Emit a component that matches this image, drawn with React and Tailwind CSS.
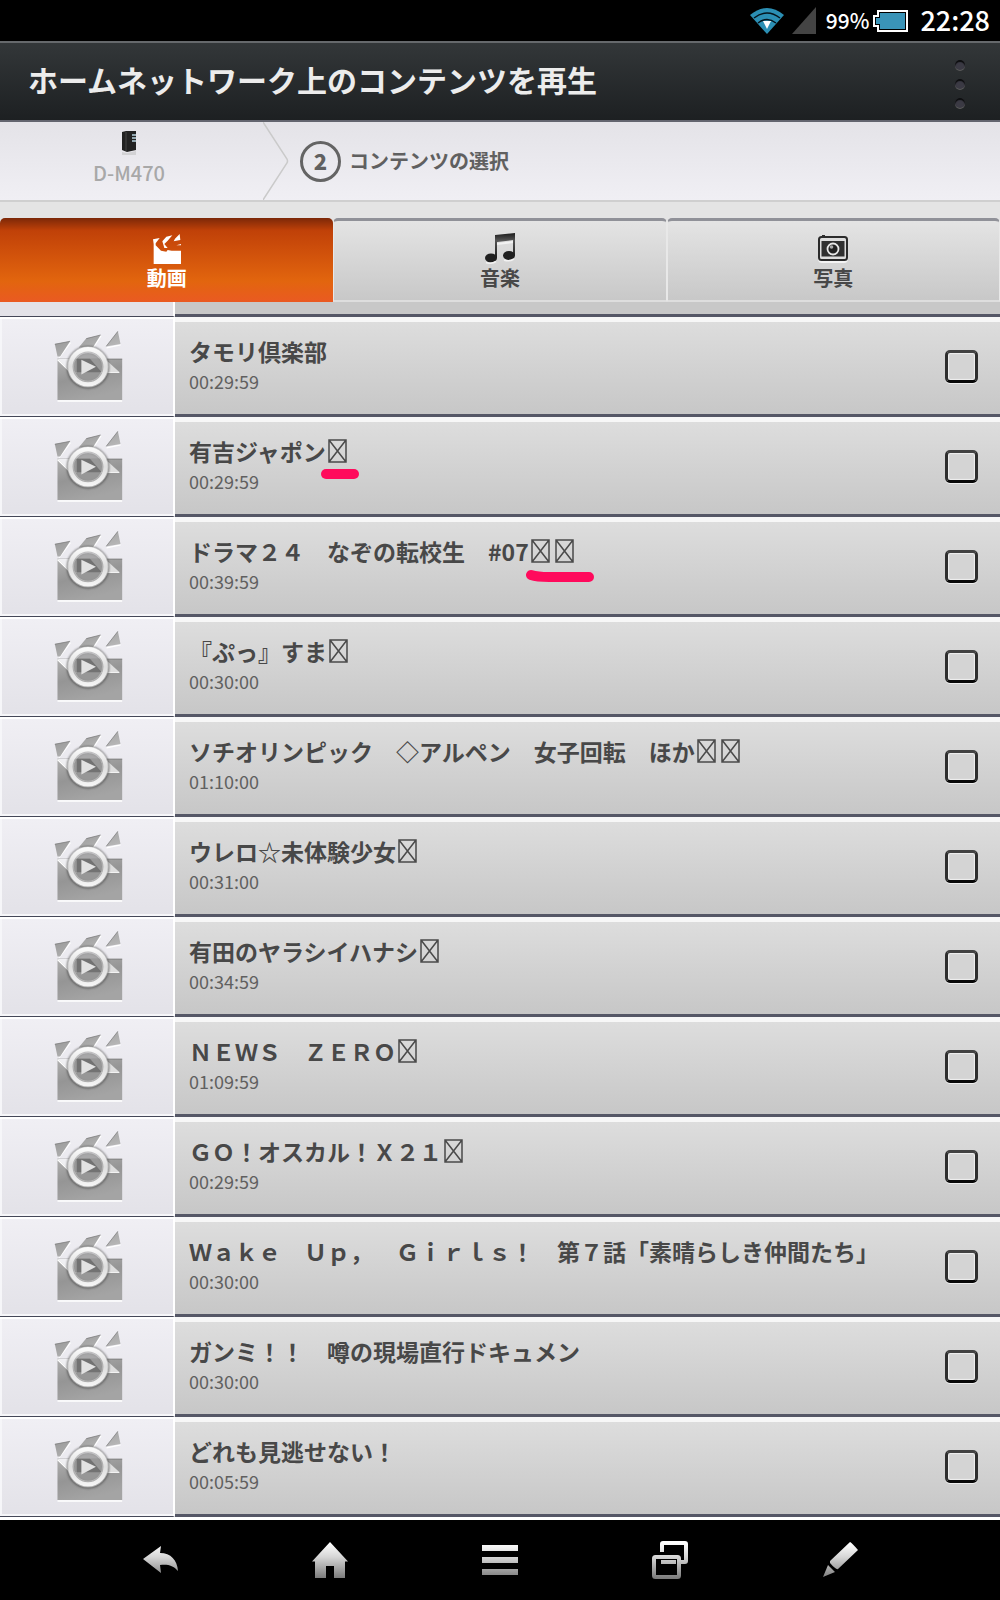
import React from "react";

const rows = [
  { title: "タモリ倶楽部", time: "00:29:59" },
  { title: "有吉ジャポン", time: "00:29:59", missing: 1, mark: "short" },
  { title: "ドラマ２４　なぞの転校生　#07", time: "00:39:59", missing: 2, mark: "long" },
  { title: "『ぷっ』すま", time: "00:30:00", missing: 1 },
  { title: "ソチオリンピック　◇アルペン　女子回転　ほか", time: "01:10:00", missing: 2 },
  { title: "ウレロ☆未体験少女", time: "00:31:00", missing: 1 },
  { title: "有田のヤラシイハナシ", time: "00:34:59", missing: 1 },
  { title: "ＮＥＷＳ　ＺＥＲＯ", time: "01:09:59", missing: 1 },
  { title: "ＧＯ！オスカル！Ｘ２１", time: "00:29:59", missing: 1 },
  { title: "Ｗａｋｅ　Ｕｐ，　Ｇｉｒｌｓ！　第７話「素晴らしき仲間たち」", time: "00:30:00" },
  { title: "ガンミ！！　噂の現場直行ドキュメン", time: "00:30:00" },
  { title: "どれも見逃せない！", time: "00:05:59" },
];

function Gradients() {
  return (
    <svg width="0" height="0" className="absolute" aria-hidden="true">
      <defs>
        <linearGradient id="nav" x1="0" y1="3" x2="0" y2="38" gradientUnits="userSpaceOnUse">
          <stop offset="0" stopColor="#ffffff" />
          <stop offset="0.4" stopColor="#d6d6d6" />
          <stop offset="1" stopColor="#7c7c7c" />
        </linearGradient>
        <linearGradient id="body" x1="0" y1="0" x2="0.4" y2="1">
          <stop offset="0" stopColor="#b0b0b0" />
          <stop offset="0.5" stopColor="#959595" />
          <stop offset="1" stopColor="#a4a4a4" />
        </linearGradient>
        <linearGradient id="slat" x1="0" y1="0" x2="1" y2="1">
          <stop offset="0" stopColor="#909090" />
          <stop offset="1" stopColor="#c4c4c4" />
        </linearGradient>
        <linearGradient id="ring" x1="0" y1="0" x2="0" y2="1">
          <stop offset="0" stopColor="#fafafa" />
          <stop offset="0.5" stopColor="#dedede" />
          <stop offset="1" stopColor="#f4f4f4" />
        </linearGradient>
        <linearGradient id="note" x1="0" y1="0" x2="0" y2="1">
          <stop offset="0" stopColor="#1c1c1c" />
          <stop offset="0.3" stopColor="#555555" />
          <stop offset="1" stopColor="#1c1c1c" />
        </linearGradient>
        <filter id="glow" x="-30%" y="-30%" width="160%" height="160%">
          <feGaussianBlur stdDeviation="4" />
        </filter>
      </defs>
    </svg>
  );
}

function Thumb() {
  return (
    <svg width="70" height="73" viewBox="40 60 210 220" aria-hidden="true">
      <path d="M50 274h195M55 143l34-45M119 118h36l26-40M198 114l42-9" stroke="#fff" strokeWidth="4" fill="none" />
      <path d="M50 147h195v124H50z" fill="url(#body)" />
      <path d="M50 148h195" stroke="#777" strokeWidth="2" />
      <path d="M42 102L88 94 58 140 50 140zM114 113L137 85 180 75 155 115zM196 110L232 64 240 102z" fill="url(#slat)" />
      <path d="M42 103L88 94M137 86L180 75M197 109L232 64" stroke="#777" strokeWidth="2" />
      <path d="M50 147L92 188V147z" fill="#efeff2" />
      <path d="M50 149L92 190" stroke="#fff" strokeWidth="4" />
      <path d="M152 147H196L236 188H190z" fill="#a0a0a0" />
      <path d="M198 152L238 188H196z" fill="#dedede" />
      <path d="M104 188h132" stroke="#f5f5f5" strokeWidth="3" />
      <circle cx="142" cy="172" r="53" fill="none" stroke="#3a3a3a" strokeWidth="22" opacity="0.65" filter="url(#glow)" />
      <circle cx="142" cy="172" r="42" fill="#979797" opacity="0.8" />
      <path d="M108 147h40l36 41h-76z" fill="#727272" />
      <circle cx="142" cy="171" r="52" fill="none" stroke="#ffffff" strokeWidth="20" opacity="0.45" />
      <circle cx="142" cy="171" r="53" fill="none" stroke="url(#ring)" strokeWidth="13" />
      <path d="M122 150L166 171 122 194z" fill="#e2e2e2" />
    </svg>
  );
}

function MissingGlyph() {
  return (
    <svg width="24" height="26" viewBox="0 0 24 26" fill="none" stroke="#4a4a4a" role="img" aria-label="外字">
      <path d="M3 2h17v22h-17zM3 2l17 22M20 2L3 24" strokeWidth="1.500" />
    </svg>
  );
}

function Mark({ kind }) {
  return kind === "short" ? (
    <svg className="absolute -left-1.5 top-[30px]" width="40" height="12" viewBox="0 0 40 12" aria-hidden="true">
      <path d="M6 6h28" stroke="#ff0a5c" strokeWidth="10" strokeLinecap="round" />
    </svg>
  ) : (
    <svg className="absolute -left-1 top-[30px]" width="70" height="16" viewBox="0 0 70 16" aria-hidden="true">
      <path d="M6 7C12 9 18 9 24 9H64" stroke="#ff0a5c" strokeWidth="10" strokeLinecap="round" fill="none" />
    </svg>
  );
}

function Row({ item, index }) {
  const id = `item-${index}`;
  return (
    <li className="flex h-[100px]">
      <div className="flex w-[175px] shrink-0 items-center justify-center border-t-2 border-r-2 border-b border-t-white border-r-white border-b-[#454858] bg-linear-to-b from-[#f0eff4] to-[#e3e2e8] pb-0.5 pl-1 shadow-[inset_2px_-2px_0_#f6f6f9]">
        <Thumb />
      </div>
      <div className="flex min-w-0 flex-1 items-center border-t-5 border-b-3 border-t-[#f7f7f7] border-b-[#555766] bg-linear-to-b from-[#dddddd] to-[#c7c7c7] pr-[22px] pb-1 pl-[14px]">
        <label htmlFor={id} className="min-w-0 flex-1">
          <span className="flex h-[30px] items-center text-[23px] leading-[30px] font-bold whitespace-pre text-[#484848] [text-spacing-trim:space-all]">
            {item.title}
            {item.missing && (
              <span className="relative flex">
                {Array.from({ length: item.missing }, (_, i) => (
                  <MissingGlyph key={i} />
                ))}
                {item.mark && <Mark kind={item.mark} />}
              </span>
            )}
          </span>
          <span className="block text-[18px] leading-[30px] text-[#606060]">{item.time}</span>
        </label>
        <input
          id={id}
          type="checkbox"
          className="size-[33px] shrink-0 appearance-none rounded-[5px] border-3 border-x-[#2e2e2e] border-t-[#424242] border-b-[#080808] bg-[#d4d4d4] shadow-[0_1px_0_#eeeeee,inset_0_0_1px_1px_#f0f0f0]"
        />
      </div>
    </li>
  );
}

function ClapperIcon() {
  return (
    <svg width="28" height="30" viewBox="0 0 84 90" fill="#fff" aria-hidden="true">
      <path d="M0 16L20 12 8 28 8 34 24 50 40 53 44 48 56 50 84 50V34H70L84 30V90H2V30zM28 22L40 8 58 4 44 20 34 30 44 42H34zM66 14L80 0 82 18 62 22z" />
    </svg>
  );
}

function NoteIcon() {
  return (
    <svg width="30" height="31" viewBox="0 0 30 31" aria-hidden="true">
      <path d="M10 2L30 0V22h-2V7L12 9V25h-2z" fill="url(#note)" />
      <path d="M12 10L28 8v2L12 12z" fill="#f2f2f2" />
      <ellipse cx="6" cy="25" rx="6" ry="4.500" fill="#202020" />
      <ellipse cx="24" cy="22.500" rx="6" ry="4.500" fill="#202020" />
      <path d="M1 29.500q5 2 10-1M19 27q5 2 10-1" stroke="#f2f2f2" strokeWidth="1.500" fill="none" />
    </svg>
  );
}

function CameraIcon() {
  return (
    <svg width="30" height="30" viewBox="0 0 30 30" aria-hidden="true">
      <rect x="0" y="4" width="30" height="25" rx="4" fill="#f4f4f4" />
      <path d="M4 3V1h3v2" fill="#2b2b2b" />
      <rect x="1" y="3" width="28" height="23" rx="2.500" fill="#dddddd" stroke="#2b2b2b" strokeWidth="2" />
      <rect x="3.500" y="7" width="23" height="15.500" fill="#303030" />
      <circle cx="15" cy="15" r="5.500" fill="#222222" stroke="#e8e8e8" strokeWidth="1.800" />
      <circle cx="13.500" cy="13" r="1.800" fill="#aaaaaa" />
    </svg>
  );
}

const inactiveTab =
  "flex h-[84px] flex-col items-center justify-end rounded-t-[5px] border-x border-t-3 border-b-2 border-x-[#e8e8e8] border-t-[#909198] border-b-[#dedede] bg-linear-to-b from-[#e4e4e4] to-[#c8c8c8] pb-2 text-[20px] leading-[28px] font-bold text-[#484848]";

const dot =
  "size-[10px] shrink-0 rounded-full bg-[#3b3a44] shadow-[0_1px_0_#5a5a5a,inset_0_2px_1px_#0c0d0e]";

export default function App() {
  return (
    <div className="min-h-screen bg-[#e4e4e4] font-['Noto_Sans_CJK_JP',sans-serif]">
      <Gradients />

      <div className="flex h-[41px] items-center justify-end bg-black pr-[10px] text-white">
        <svg width="34" height="27" viewBox="0 0 34 27" aria-hidden="true">
          <path d="M0 8Q17 -6 34 8L17 27z" fill="#2b8fb4" />
          <path d="M4 11Q17 1 30 11M8 16Q17 9 26 16" stroke="#04141c" strokeWidth="1.500" fill="none" />
          <path d="M13 14h8l-4 8z" fill="#fff" />
        </svg>
        <svg className="ml-2" width="24" height="27" viewBox="0 0 24 27" aria-hidden="true">
          <path d="M24 0V27H0z" fill="#444" />
        </svg>
        <span className="ml-2.5 pb-0.5 text-[21px] leading-[30px] font-medium">99%</span>
        <svg className="ml-1" width="35" height="22" viewBox="0 0 35 22" aria-hidden="true">
          <path d="M5 1H34V21H5V16H1V6H5z" fill="#000" stroke="#fff" strokeWidth="2" />
          <path d="M7 3H32V19H7V14H3V8H7z" fill="#3a94b8" />
        </svg>
        <span className="ml-3 pb-0.5 text-[27px] leading-[30px] font-medium">22:28</span>
      </div>

      <header className="flex h-[81px] items-center justify-between border-t-2 border-b-2 border-t-[#66696c] border-b-[#63656f] bg-linear-to-b from-[#333739] to-[#1d2022] pr-[30px] pl-7">
        <h1 className="pb-1.5 text-[30px] leading-[40px] font-bold text-[#ececec]">ホームネットワーク上のコンテンツを再生</h1>
        <button type="button" aria-label="メニュー" className="flex w-5 flex-col items-center gap-[9px] pt-1">
          <span className={dot} />
          <span className={dot} />
          <span className={dot} />
        </button>
      </header>

      <nav className="flex h-20 items-center border-b-2 border-[#cfcfcf] bg-linear-to-b from-[#e4e3e8] to-[#f0eff4]">
        <a href="#device" className="flex w-[258px] flex-col items-center gap-0.5 pb-1 text-[20px] leading-7 font-medium text-[#a8a8a8]">
          <svg width="14" height="26" viewBox="0 0 14 26" aria-hidden="true">
            <path d="M0 1L4 0H14V19L5 21 0 19z" fill="#222" />
            <path d="M4 1v19" stroke="#444" />
            <path d="M10 4h4M10 7h4M10 10h4" stroke="#b8d4e0" strokeWidth="1.500" />
            <path d="M0 21l5 1 9-2v4H0z" fill="#bbb" opacity="0.5" />
          </svg>
          D-M470
        </a>
        <svg className="ml-[5px]" width="26" height="78" viewBox="0 0 26 78" fill="none" aria-hidden="true">
          <path d="M0 0L24 37Q25 39 24 41L0 78" stroke="#cacaca" strokeWidth="1.500" />
        </svg>
        <span className="ml-[11px] flex size-[41px] items-center justify-center rounded-full border-3 border-[#646464] pb-0.5 text-[22px] leading-7 font-black text-[#606060]">
          2
        </span>
        <span className="ml-2 text-[20px] leading-7 font-bold text-[#606060]">コンテンツの選択</span>
      </nav>

      <div role="tablist" className="mt-4 grid h-[84px] grid-cols-3">
        <button
          type="button"
          role="tab"
          aria-selected="true"
          className="flex h-[84px] flex-col items-center justify-end rounded-t-[5px] bg-linear-[180deg,#7c2808_0%,#c04108_15%,#cf500b_40%,#e2650e_75%,#ea5a22_100%] pb-2.5 text-[20px] leading-[28px] font-bold text-white"
        >
          <ClapperIcon />
          動画
        </button>
        <button type="button" role="tab" aria-selected="false" className={inactiveTab}>
          <NoteIcon />
          音楽
        </button>
        <button type="button" role="tab" aria-selected="false" className={inactiveTab}>
          <CameraIcon />
          写真
        </button>
      </div>

      <main>
        <div className="flex h-[15px]">
          <div className="w-[175px] border-r-2 border-b border-r-white border-b-[#454858] bg-[#e3e2e8]" />
          <div className="flex-1 border-b-3 border-[#555766] bg-[#c8c8c8]" />
        </div>
        <ul>
          {rows.map((item, index) => (
            <Row key={item.title} item={item} index={index} />
          ))}
        </ul>
      </main>

      <footer className="grid h-[83px] grid-cols-5 items-center border-t-3 border-white bg-black px-[7.5%]">
        <button type="button" aria-label="戻る" className="flex justify-center">
          <svg width="40" height="40" viewBox="0 0 40 40" fill="url(#nav)">
            <path d="M3 19L21 6 20 13C31 13 37 20 38 31 33 25 27 24 20 25L21 33z" />
          </svg>
        </button>
        <button type="button" aria-label="ホーム" className="flex justify-center">
          <svg width="40" height="40" viewBox="0 0 40 40" fill="url(#nav)">
            <path d="M20 2L38 21.500H35V38H24V26H16V38H5V21.500H2z" />
          </svg>
        </button>
        <button type="button" aria-label="メニュー" className="flex justify-center">
          <svg width="40" height="40" viewBox="0 0 40 40" fill="url(#nav)">
            <path d="M2 5H38V11H2zM2 17H38V23H2zM2 29H38V35H2z" />
          </svg>
        </button>
        <button type="button" aria-label="最近使ったアプリ" className="flex justify-center">
          <svg width="40" height="40" viewBox="0 0 40 40" fill="none" stroke="url(#nav)" strokeWidth="4">
            <path d="M12 12V4Q12 3 13 3H35Q36 3 36 4V21Q36 22 35 22H31M11 22H26" />
            <rect x="4" y="17" width="25" height="20" rx="1.500" />
          </svg>
        </button>
        <button type="button" aria-label="ペン" className="flex justify-center">
          <svg width="40" height="40" viewBox="0 0 40 40" fill="url(#nav)">
            <path d="M30 2Q31 2 38 10L18 29Q16 30 10 23V21zM8 25L15 32 3 37z" />
          </svg>
        </button>
      </footer>
    </div>
  );
}
